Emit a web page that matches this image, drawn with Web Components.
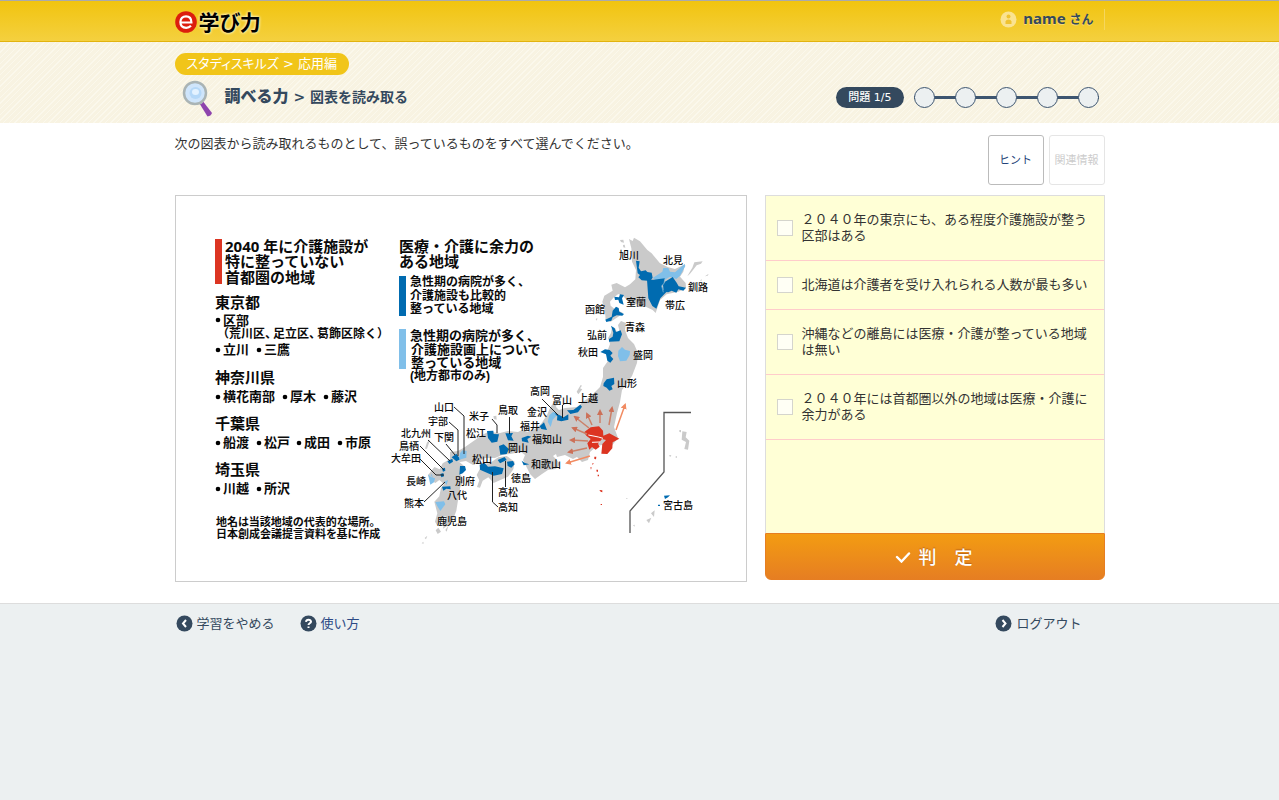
<!DOCTYPE html>
<html lang="ja">
<head>
<meta charset="utf-8">
<title>e学び力 - 図表を読み取る</title>
<style>
:root { --navy: #34495e; --yellow: #f1c40f; --page: 930px; }
html, body { margin: 0; }
body { min-height: 100vh; display: flex; flex-direction: column; background: #ecf0f1; color: #333;
  font: 13px/16px "DejaVu Sans", "Noto Sans CJK JP", sans-serif; }
main { background: #fff; }
</style>
</head>
<body>
<site-header user="name"></site-header>
<lesson-header category="スタディスキルズ &gt; 応用編" unit="調べる力" topic="図表を読み取る" current="1" total="5"></lesson-header>
<main>
  <quiz-page>
    <span slot="question">次の図表から読み取れるものとして、誤っているものをすべて選んでください。</span>
    <tool-button slot="tools" color="#1d3f77">ヒント</tool-button>
    <tool-button slot="tools" disabled>関連情報</tool-button>
    <region-map slot="figure"></region-map>
    <answer-form slot="answers">
      <answer-option>２０４０年の東京にも、ある程度介護施設が整う区部はある</answer-option>
      <answer-option>北海道は介護者を受け入れられる人数が最も多い</answer-option>
      <answer-option>沖縄などの離島には医療・介護が整っている地域は無い</answer-option>
      <answer-option>２０４０年には首都圏以外の地域は医療・介護に余力がある</answer-option>
    </answer-form>
  </quiz-page>
</main>
<site-footer>
  <icon-link icon="back">学習をやめる</icon-link>
  <icon-link icon="help" class="blue">使い方</icon-link>
  <icon-link slot="end" icon="next">ログアウト</icon-link>
</site-footer>

<script>
class Base extends HTMLElement {
  connectedCallback() {
    if (this.shadowRoot) return;
    this.attachShadow({ mode: 'open' }).innerHTML =
      `<style>*{box-sizing:border-box}${this.css()}</style>${this.html()}`;
  }
}

customElements.define('site-header', class extends Base {
  css() { return `
    :host { display: block; border-top: 1px solid #aaa; border-bottom: 1px solid #e2b30f;
      background: linear-gradient(#f1c40f, #f4d03f); }
    header { max-width: var(--page); height: 40px; margin: 0 auto; display: flex; justify-content: space-between; }
    .logo { display: flex; align-items: center; gap: 2px; color: #000; text-decoration: none;
      font: 700 21px/38px "Noto Sans CJK JP", sans-serif; font-feature-settings: "palt";
      text-shadow: 0 0 3px #fff8d0, 0 0 3px #fff8d0; }
    .logo svg { width: 22px; height: 22px; margin-top: 2px; }
    .user { display: flex; align-items: center; align-self: center; gap: 6px; height: 21px; margin-bottom: 4px; padding-right: 10px;
      border-right: 1px solid #f5d65e; color: var(--navy); font: 700 15px/20px "Noto Sans", "Noto Sans CJK JP", sans-serif; text-shadow: 0 1px 0 #f8dc70; }
    .user small { font-size: 12px; }`; }
  html() { return `<header>
    <a class="logo" href="#"><svg viewBox="0 0 22 22"><circle cx="11" cy="11" r="10.8" fill="#dc1e0d"/>
      <path d="M5.5 11.5H16.4C16.4 7.6 14.2 5.3 11 5.3S5.4 7.6 5.4 11.1S7.6 16.8 11.2 16.8C13.4 16.8 14.8 16 16 14.8" fill="none" stroke="#fff" stroke-width="2.2"/></svg>学び力</a>
    <div class="user"><svg width="17" height="17" viewBox="0 0 17 17"><circle cx="8.500" cy="8.500" r="8" fill="#fae391"/>
      <circle cx="8.500" cy="5.500" r="2" fill="#efc330"/><path d="M5.500 13V10.500Q6 8.500 8.500 8.500T11.500 10.500V13Z" fill="#efc330"/></svg>
      <span>${this.getAttribute('user')} <small>さん</small></span></div></header>`; }
});

customElements.define('lesson-header', class extends Base {
  css() { return `
    :host { display: block; color: var(--navy);
      background: repeating-linear-gradient(135deg, #f8f3e2 0 3px, #fbf8ec 3px 4px); }
    section { max-width: var(--page); min-height: 81px; margin: 0 auto; padding-top: 11px; }
    .tag { display: inline-block; height: 22px; padding: 0 12px; border-radius: 11px; background: #f1c519; color: #fff; line-height: 21px;
      font-feature-settings: "palt"; }
    .row { display: flex; justify-content: space-between; align-items: center; height: 48px; padding: 0 6px 4px; }
    h1 { display: flex; align-items: center; margin: 0; font-size: 14px; white-space: pre; }
    h1 b { font-size: 16px; } h1 svg { margin: 4px 11px 0 0; }`; }
  html() { const a = n => this.getAttribute(n).replace('>', '&gt;'); return `<section>
    <div class="tag">${a('category')}</div>
    <div class="row"><h1><svg width="33" height="38" viewBox="0 0 33 38">
      <path d="M18.500 23.500Q19.500 21.500 22.500 22L31 33Q30 36 26.500 36.500Z" fill="#8e44ad"/>
      <path d="M18.500 20.500L21 23.500" stroke="#aab7b8" stroke-width="3"/>
      <circle cx="14" cy="13" r="11" fill="#cfe5fb" stroke="#aab4b5" stroke-width="2.500"/>
      <circle cx="14.500" cy="13" r="6" fill="#b5d8f8"/><ellipse cx="14.500" cy="12" rx="3.500" ry="3" fill="#e4f2ff"/></svg><b>${a('unit')}</b> &gt; ${a('topic')}</h1>
    <step-progress current="${a('current')}" total="${a('total')}"></step-progress></div></section>`; }
});

customElements.define('step-progress', class extends Base {
  css() { return `
    :host { display: flex; align-items: center; gap: 10px; }
    .badge { height: 21px; padding: 0 12px; border-radius: 11px; background: var(--navy); color: #fff; font-size: 11px; line-height: 21px; font-weight: 500; }
    ol { display: flex; gap: 20px; margin: 0; padding: 0; list-style: none;
      background: linear-gradient(#3d5570, #3d5570) center / 100% 3px no-repeat; }
    li { width: 21px; height: 21px; border: 1px solid #3d5570; border-radius: 50%; background: #ecf0f1; }`; }
  html() { const t = +this.getAttribute('total');
    return `<span class="badge">問題 ${this.getAttribute('current')}/${t}</span><ol>${'<li></li>'.repeat(t)}</ol>`; }
});

customElements.define('tool-button', class extends Base {
  css() { return `
    :host { display: block; }
    button { width: 56px; height: 50px; padding: 0 0 2px; border: 1px solid #bbb; border-radius: 3px; background: #fff;
      color: ${this.getAttribute('color') || '#ccc'}; font: 11px/16px "Noto Sans CJK JP", sans-serif; }
    button:disabled { border-color: #e5e5e5; }`; }
  html() { return `<button type="button" ${this.hasAttribute('disabled') ? 'disabled' : ''}><slot></slot></button>`; }
});

customElements.define('quiz-page', class extends Base {
  css() { return `
    :host { display: block; max-width: var(--page); margin: 0 auto; padding: 12px 0 21px; }
    .top { display: flex; justify-content: space-between; margin-bottom: 10px; }
    p { margin: 1px 0 0; } .tools { display: flex; gap: 5px; }
    .grid { display: grid; grid-template-columns: 1fr 340px; gap: 18px; align-items: start; }`; }
  html() { return `<div class="top"><p><slot name="question"></slot></p><div class="tools"><slot name="tools"></slot></div></div>
    <div class="grid"><slot name="figure"></slot><slot name="answers"></slot></div>`; }
});

customElements.define('answer-form', class extends Base {
  css() { return `
    :host { display: block; }
    .list { min-height: 338px; border: 1px solid #ddd; border-bottom: 0; background: #ffffd6; }
    button { display: flex; width: 100%; height: 47px; align-items: center; justify-content: center; gap: 8px; padding: 0 2px 2px 0;
      border: 1px solid #e67e22; border-radius: 0 0 6px 6px; background: linear-gradient(#f39c12, #e67e22); color: #fff;
      font: 500 18px/24px "Noto Sans CJK JP", sans-serif; text-shadow: 0 -1px 1px #b9651a; }`; }
  html() { return `<form><div class="list"><slot></slot></div><button type="button">
    <svg width="16" height="14" viewBox="0 0 16 14"><path d="M2 8L6.500 12.500L14 4.500" fill="none" stroke="#fff" stroke-width="2.400" stroke-linecap="round"/></svg>
    <span>判　定</span></button></form>`; }
});

customElements.define('answer-option', class extends Base {
  css() { return `
    :host { display: block; border-bottom: 1px solid #ffcccb; }
    label { display: flex; align-items: center; gap: 9px; padding: 16px 14px 16px 11px; }
    input { flex: none; width: 16px; height: 16px; margin: 0; appearance: none; border: 1px solid #d5d5cd; background: #fffff5; }
    input:checked { background: #e67e22; }`; }
  html() { return `<label><input type="checkbox"><span><slot></slot></span></label>`; }
});

customElements.define('icon-link', class extends Base {
  css() { return `
    :host { display: block; color: var(--navy); } :host(.blue) { color: #2c4a85; }
    a { display: flex; align-items: center; gap: 4px; color: inherit; text-decoration: none; }`; }
  html() {
    const mark = {
      back: '<path d="M10 5L7 8.500L10 12"/>', next: '<path d="M7.500 5L10.500 8.500L7.500 12"/>',
      help: '<path d="M6 6.800Q6.200 4.700 8.500 4.700T11 6.700C11 8.300 8.500 8.200 8.500 10M8.500 11.500V13"/>'
    }[this.getAttribute('icon')];
    return `<a href="#"><svg width="17" height="17" viewBox="0 0 17 17"><circle cx="8.500" cy="8.500" r="8" fill="#34495e"/>
      <g fill="none" stroke="#fff" stroke-width="2">${mark}</g></svg><slot></slot></a>`; }
});

customElements.define('site-footer', class extends Base {
  css() { return `
    :host { display: block; border-top: 1px solid #ddd; }
    footer { display: flex; max-width: var(--page); margin: 0 auto; padding: 11px 23px 0 1px; justify-content: space-between; }
    nav { display: flex; gap: 25px; }`; }
  html() { return `<footer><nav><slot></slot></nav><slot name="end"></slot></footer>`; }
});

const texts = [
  ['h', [[225,252,'2040 年に介護施設が'],[225,267,'特に整っていない'],[225,283,'首都圏の地域'],[215,308,'東京都'],[215,383,'神奈川県'],[215,429,'千葉県'],[215,475,'埼玉県'],[399,252,'医療・介護に余力の'],[399,267,'ある地域']]],
  ['m', [[223,325,'区部'],[223,354,'立川'],[264,354,'三鷹'],[223,401,'横花南部'],[290,401,'厚木'],[331,401,'藤沢'],[223,447,'船渡'],[264,447,'松戸'],[304,447,'成田'],[345,447,'市原'],[223,493,'川越'],[264,493,'所沢'],[410,340,'急性期の病院が多く、'],[411,354,'介護施設画上についで'],[411,367,'整っている地域']]],
  ['s', [[217,338,'（'],[229,338,'荒川区、'],[273,338,'足立区、'],[317,338,'葛飾区除く'],[377,338,'）'],[410,286,'急性期の病院が多く、'],[410,300,'介護施設も比較的'],[410,313,'整っている地域'],[410,380,'(地方都市のみ)']]],
  ['n', [[216,526,'地名は当該地域の代表的な場所。'],[216,538,'日本創成会議提言資料を基に作成']]],
  ['c', [[619,259,'旭川'],[663,264,'北見'],[688,291,'釧路'],[665,309,'帯広'],[626,306,'室蘭'],[585,313,'函館'],[625,331,'青森'],[587,339,'弘前'],[578,356,'秋田'],[633,359,'盛岡'],[617,387,'山形'],[578,402,'上越'],[530,395,'高岡'],[552,404,'富山'],[527,416,'金沢'],[520,430,'福井'],[532,443,'福知山'],[531,468,'和歌山'],[498,414,'鳥取'],[469,420,'米子'],[466,437,'松江'],[508,452,'岡山'],[472,463,'松山'],[511,482,'徳島'],[498,496,'高松'],[498,511,'高知'],[434,411,'山口'],[428,425,'宇部'],[434,441,'下関'],[401,437,'北九州'],[399,450,'鳥栖'],[391,462,'大牟田'],[406,485,'長崎'],[404,507,'熊本'],[455,485,'別府'],[447,499,'八代'],[437,525,'鹿児島'],[663,509,'宮古島']]]
];
const dots = [[218,320],[218,350],[259,350],[218,397],[285,397],[326,397],[218,443],[259,443],[299,443],[340,443],[218,489],[259,489]];
const arrows = [[589,428,575,417],[592,425,587,414],[600,423,600,411],[609,425,612,408],[616,430,625,405],[587,434,573,428],[588,441,571,440],[587,448,569,452],[590,456,567,463]];

customElements.define('region-map', class extends Base {
  css() { return `
    :host { display: block; border: 1px solid #ccc; background: #fff; }
    svg { display: block; width: 100%; }
    text { font-family: "Liberation Sans", "Noto Sans CJK JP", sans-serif; fill: #0a0a0a; }
    .h { font-family: "Noto Sans", "Noto Sans CJK JP", sans-serif; font-size: 15px; font-weight: 700; } .m { font-size: 13px; font-weight: 700; }
    .s { font-size: 12px; font-weight: 700; } .n { font-size: 11px; font-weight: 700; font-feature-settings: "palt"; }
    .c { font-size: 10px; font-weight: 500; }
    .land { fill: #cacaca; } .dark { fill: #006bb0; } .light { fill: #80bfe9; } .red { fill: #dc3522; }
    .lead { fill: none; stroke: #222; stroke-width: 1; }`; }
  html() {
    const label = texts.map(([c, l]) => l.map(([x, y, t]) => `<text class="${c}" x="${x}" y="${y}">${t}</text>`).join('')).join('');
    const arrow = arrows.map(([a, b, c, d], i) => `<path d="M${a} ${b}L${c} ${d}" stroke="${i === 4 || i === 8 ? '#f18b62' : '#cc8068'}" stroke-width="1.500" marker-end="url(#${i === 4 || i === 8 ? 'tipB' : 'tip'})"/>`).join('');
    return `<svg viewBox="176 196 570 385" role="img" aria-label="医療・介護の地域図">
    <defs><marker id="tip" viewBox="0 0 6 6" refX="4" refY="3" markerWidth="4" markerHeight="4" orient="auto"><path d="M0 0L6 3L0 6Z" fill="#cc7058"/></marker>
    <marker id="tipB" viewBox="0 0 6 6" refX="4" refY="3" markerWidth="4" markerHeight="4" orient="auto"><path d="M0 0L6 3L0 6Z" fill="#f18b62"/></marker></defs>
    <path class="red" d="M215 239h7v45h-7z"/><path class="dark" d="M399 276h7v40h-7z"/><path class="light" d="M399 329h7v40h-7z"/>
    <path class="land" d="M612 327L615 328L618 334L620 333L618 325L621 321L626 323L625 330L628 338L634 344L638 353L637 363L632 376L627 383L622 390L620 402L617 413L614 427L618 438L610 448L604 453L602 445L597 446L590 452L588 460L582 462L577 457L573 459L565 455L557 457L556 454L553 456L556 459L560 464L556 469L548 470L542 474L535 479L530 474L526 466L523 460L525 455L521 452L510 454L502 455L495 458L485 458L473 465L466 461L460 462L450 460L450 452L458 451L465 447L475 440L482 435L488 432L500 433L508 431L518 432L522 430L528 432L535 429L541 424L547 415L550 408L553 403L557 402L556 407L559 410L565 408L577 407L584 401L590 397L597 390L600 387L603 377L603 368L610 358L607 352L610 344L608 338L611 333Z"/>
    <g transform="translate(560 225) scale(.333333)">
      <path class="land" d="M207 42L218 48L222 38L240 49L262 75L275 85L300 115L325 127L345 132L375 118L370 140L360 155L377 174L378 190L355 200L320 208L300 225L287 264L278 255L235 235L215 243L205 230L190 214L175 207L160 218L150 230L152 242L165 253L188 263L175 275L152 290L137 285L135 260L127 230L133 212L158 197L154 179L170 174L195 187L210 178L226 163L228 135L216 110L214 70Z"/>
      <path class="land" d="M382 154L387 145L397 128L403 112L428 109L423 116L410 121L399 135L390 146ZM420 166l6-3l-2 5ZM435 154L446 146L443 152ZM180 45L190 44L192 53L183 51ZM189 60L194 59L196 68L190 67ZM107 283L112 278L111 287ZM50 500L62 480L66 482L60 490L67 493L55 508Z"/>
      <path class="light" d="M278 159L307 140L310 129L325 129L330 140L345 142L374 117L376 123L360 152L349 162L330 155L313 165L287 164Z"/>
      <path class="dark" d="M228 107L239 109L236 128L243 139L257 136L262 141L275 143L278 158L271 168L245 166L235 157L240 150L233 145Z"/>
      <path class="dark" d="M261 164L280 164L315 160L312 175L305 183L310 195L320 200L301 220L289 251L277 243L265 220Z"/>
      <path class="dark" d="M309 179L315 170L338 156L350 173L356 184L378 188L370 197L355 193L349 203L335 197L325 202L311 200Z"/>
      <path d="M315 160L312 175L305 183L310 202" fill="none" stroke="#8fc0dd" stroke-width="2"/>
      <path class="dark" d="M163 215L177 217L180 208L192 210L186 220L191 239L178 234L175 224L165 225Z"/>
      <path class="dark" d="M168 245L176 249L178 260L192 267L187 272L170 271L158 277L154 287L139 291L136 284L155 275L158 257Z"/>
      <path class="dark" d="M153 302L164 310L168 321L182 316L186 328L178 349L147 350L147 342L158 335L160 323Z"/>
      <path class="dark" d="M121 381L135 373L149 375L158 384L151 392L160 402L151 413L142 407L138 388Z"/>
      <path class="light" d="M175 377L186 366L195 374L210 378L209 390L199 407L180 409L174 393Z"/>
      <path class="dark" d="M131 475L140 463L162 458L163 477L154 483L158 493L148 497L140 488L130 483Z"/>
    </g>
    <g transform="translate(385 380) scale(.333333)">
      <path class="land" d="M275 285L292 252L315 249L340 232L365 228L389 245L385 268L369 290L346 300L326 309L310 292L293 302L285 323L276 321L283 301Z"/>
      <path class="land" d="M185 243L200 233L224 247L240 260L225 283L239 300L226 320L220 355L214 392L200 428L174 446L182 407L164 420L157 437L150 425L157 400L148 365L163 349L168 324L177 312L163 300L151 309L138 301L129 286L148 261L164 268L173 250Z"/>
      <path class="land" d="M120 206L126 187L135 180L126 206ZM325 109L334 107L335 119L327 117ZM152 451L160 443L168 455L158 462ZM181 450L190 437L185 455ZM78 307L92 300L82 315ZM95 292L104 290L100 299ZM110 490L115 485L116 491ZM119 474L127 467L123 478Z"/>
      <path class="dark" d="M306 153L325 152L326 162L342 163L337 185L320 188L309 174ZM361 160L384 159L379 169L386 182L369 181ZM410 174L429 167L439 170L427 177L431 188L411 184ZM342 198L356 193L372 207L365 222L346 224ZM338 240L359 231L365 240L345 250ZM366 245L384 243L389 253L379 263L368 258ZM410 242L420 249L433 253L416 256ZM284 254L298 248L309 260L330 259L356 265L351 282L326 287L285 269ZM225 258L240 258L243 270L233 280L223 284ZM200 232L214 221L226 238L214 244ZM187 244L202 236L204 245L193 252ZM171 266L180 263L181 272L174 275ZM166 282L175 279L177 289L169 292ZM171 320L196 319L197 328L184 326L175 332Z"/>
      <path class="light" d="M225 220L232 211L245 213L244 233L222 239ZM129 283L138 291L150 295L147 307L136 314ZM178 305L189 300L185 315ZM151 366L177 364L181 373L166 393L157 379ZM137 285L140 282L144 295Z"/>
    </g>
    <g transform="translate(510 370) scale(.333333)">
      <path class="light" d="M113 155L118 136L130 125L144 132L128 149L122 171Z"/>
      <path class="dark" d="M133 129L146 134L161 142L175 133L175 149L154 154L141 151L142 139ZM171 121L190 120L211 104L216 110L204 127L181 132ZM89 169L102 157L111 180L94 177Z"/>
      <path class="red" d="M222 187L242 172L267 169L279 182L280 197L298 190L328 206L308 217L307 235L292 252L274 251L277 222L288 210L276 207L264 221L269 230L257 239L246 231L238 239L232 220L242 207L229 197ZM253 260l6 0l-1 8l-5-1ZM247 280l4-1l-3 7ZM241 292l4 0l-2 7ZM259 299l5 0l0 6l-4 0ZM263 314l4 0l0 5l-4 0ZM268 360l9 1l0 6l-5-2ZM272 402h4v3h-4z"/>
      <path fill="none" stroke="#fff" stroke-width="3" d="M235 195L265 201L279 205M246 217L270 216"/>
      <path class="land" d="M517 184L530 186L527 202L538 212L534 239L523 237L528 216L515 209ZM508 180l5 0l0 7l-5-1ZM478 255l6 1l-2 4l-4-1ZM497 259h4v4h-4zM423 430L434 421L432 441ZM409 450L424 443L417 460ZM369 466l5-2v6ZM349 384h3v3h-3z"/>
      <path class="dark" d="M462 377L480 376L474 382L465 387ZM444 404h6v4h-6z"/>
    </g>
    ${arrow}
    <path d="M691 412.500H664V472L630 511V533" fill="none" stroke="#555" stroke-width="1.300"/>
    <path class="lead" d="M454 407L464 416V454M449 422L458 430V456M446 444L455 455M428 440L450 461M420 446L444 470M420 459L436 475H444M424 502L445 482M492 419L497 425V433M509.500 417V434M505.500 461V487M492.500 472V502L498 507M542 399L558 415M562.500 405V418"/>
    ${dots.map(([x, y]) => `<circle cx="${x}" cy="${y}" r="2.300"/>`).join('')}${label}</svg>`; }
});
</script>
</body>
</html>
